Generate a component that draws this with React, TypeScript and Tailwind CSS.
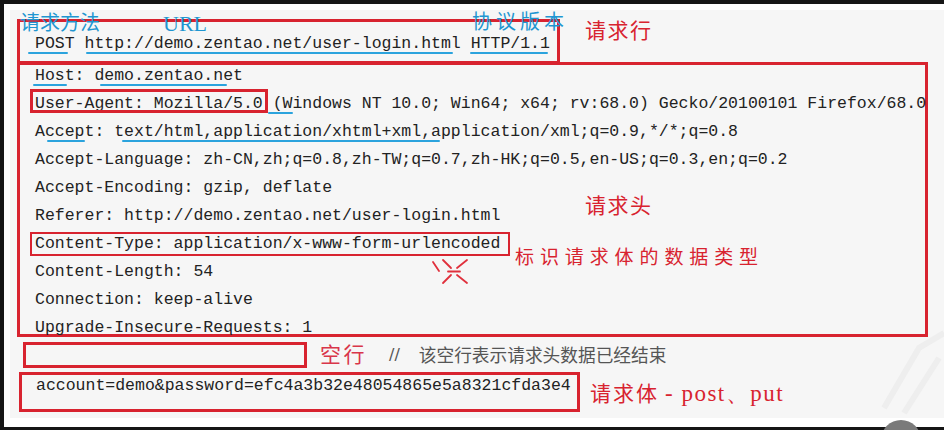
import React from "react";

function UL({ left, width, top }: { left: number; width: number; top: number }) {
  return (
    <span
      className="absolute h-[2px] bg-[#2ba3dd] rounded-full"
      style={{ left, width, top }}
    />
  );
}

export default function App() {
  return (
    <div className="relative w-[944px] h-[430px] overflow-hidden bg-[#161616] pt-[4px] pl-[4px]">
      <div className="h-[423px] bg-white pl-[6px] pt-[6px] pb-[9px]">
        <div className="relative h-full bg-[#f6f6f6] text-[#222] font-['Liberation_Mono','DejaVu_Sans_Mono',monospace] text-[16.5px]">
          {/* Request line row */}
          <div className="flex items-start pt-[9px] pl-[7px]">
            <div className="w-[543px] h-[45px] border-[3px] border-[#d8232f] pt-[9px] pl-[15px]">
              <div className="relative leading-[26px] whitespace-pre">
                POST http://demo.zentao.net/user-login.html HTTP/1.1
                <UL left={-7} width={40} top={21} />
                <UL left={51} width={367} top={21} />
                <UL left={435} width={78} top={21} />
              </div>
            </div>
            <div className="ml-[25px] mt-[0px] text-[21px] leading-none tracking-[1.5px] text-[#d8232f] font-['Noto_Sans_CJK_SC',sans-serif]">
              请求行
            </div>
          </div>

          {/* Header box */}
          <div className="relative ml-[7px] -mt-[2px] w-[911px] h-[275px] border-[3px] border-[#d8232f]">
            <div className="-mt-[3px] pl-[15px] leading-[28px] whitespace-pre">
              <div className="relative h-[28px]">
                Host: demo.zentao.net
                <UL left={-2} width={34} top={22} />
                <UL left={65} width={127} top={22} />
              </div>
              <div className="relative h-[28px]">
                User-Agent: Mozilla/5.0 (Windows NT 10.0; Win64; x64; rv:68.0) Gecko/20100101 Firefox/68.0
                <span className="absolute left-[-5px] top-[-1px] w-[238px] h-[24px] border-[3px] border-[#d8232f]" />
                <UL left={233} width={25} top={22} />
              </div>
              <div className="relative h-[28px]">
                Accept: text/html,application/xhtml+xml,application/xml;q=0.9,*/*;q=0.8
                <UL left={12} width={38} top={22} />
                <UL left={87} width={318} top={22} />
              </div>
              <div className="h-[28px]">Accept-Language: zh-CN,zh;q=0.8,zh-TW;q=0.7,zh-HK;q=0.5,en-US;q=0.3,en;q=0.2</div>
              <div className="h-[28px]">Accept-Encoding: gzip, deflate</div>
              <div className="h-[28px]">Referer: http://demo.zentao.net/user-login.html</div>
              <div className="relative h-[28px]">
                Content-Type: application/x-www-form-urlencoded
                <span className="absolute left-[-5px] top-[2px] w-[480px] h-[24px] border-2 border-[#d8232f]" />
              </div>
              <div className="relative h-[28px]">
                Content-Length: 54
                <svg className="absolute left-[395px] top-[0px]" width="46" height="28" viewBox="0 0 46 28" fill="none" stroke="#e0303c" strokeWidth="1.8" strokeLinecap="round">
                  <path d="M3 4 L9 13" />
                  <path d="M13 2 L21 10" />
                  <path d="M13 25 L21 17" />
                  <path d="M37 2 L27 10" />
                  <path d="M37 25 L27 17" />
                  <path d="M18 13.5 L30 13.5" />
                </svg>
              </div>
              <div className="h-[28px]">Connection: keep-alive</div>
              <div className="h-[28px]">Upgrade-Insecure-Requests: 1</div>
            </div>
            <div className="absolute left-[565px] top-[129px] text-[21px] leading-none tracking-[1.5px] text-[#d8232f] font-['Noto_Sans_CJK_SC',sans-serif]">
              请求头
            </div>
            <div className="absolute left-[495px] top-[181px] text-[19px] leading-none tracking-[5.9px] text-[#d8232f] font-['Noto_Sans_CJK_SC',sans-serif]">
              标识请求体的数据类型
            </div>
          </div>

          {/* Empty line row */}
          <div className="flex items-center mt-[5px]">
            <div className="ml-[13px] w-[284px] h-[26px] border-[3px] border-[#d8232f]" />
            <div className="ml-[13px] -mt-[3px] text-[21px] leading-none tracking-[2.5px] text-[#d9364a] font-['Noto_Sans_CJK_SC',sans-serif]">
              空行
            </div>
            <div className="ml-[22px] flex items-center text-[#555] text-[17.7px] leading-none font-['Noto_Sans_CJK_SC',sans-serif]">
              <span className="font-['DejaVu_Sans',sans-serif] text-[16px] mr-[19px]">//</span>
              <span>该空行表示请求头数据已经结束</span>
            </div>
          </div>

          {/* Body row */}
          <div className="flex items-start mt-[4px]">
            <div className="ml-[9px] w-[561px] h-[40px] border-[3px] border-[#d8232f] pl-[14px] leading-[22px] whitespace-pre">
              account=demo&amp;password=efc4a3b32e48054865e5a8321cfda3e4
            </div>
            <div className="ml-[10px] mt-[10px] flex items-baseline text-[#d8232f] leading-none">
              <span className="text-[21px] tracking-[2px] font-['Noto_Sans_CJK_SC',sans-serif]">请求体</span>
              <span className="ml-[6px] text-[23px] tracking-[1.5px] font-['Liberation_Serif',serif]">- post、put</span>
            </div>
          </div>

          {/* Overlay labels on top of the request line */}
          <div className="absolute left-[10px] top-[2px] text-[20px] leading-none text-[#1f96d1] font-['Noto_Sans_CJK_SC',sans-serif]">
            请求方法
          </div>
          <div className="absolute left-[153px] top-[3px] text-[22px] leading-none text-[#1f96d1] font-['Liberation_Serif',serif]">
            URL
          </div>
          <div className="absolute left-[462px] top-[1px] text-[20px] leading-none tracking-[4px] text-[#1f96d1] font-['Noto_Sans_CJK_SC',sans-serif]">
            协议版本
          </div>

          {/* faint watermark */}
          <svg className="absolute right-0 bottom-0" width="80" height="90" viewBox="0 0 80 90" fill="none" stroke="#eeeeee" strokeWidth="6">
            <path d="M20 80 L55 20 L80 5" />
            <path d="M40 85 L75 30" />
          </svg>
        </div>
      </div>
      <div className="absolute left-[881px] top-[420px] w-[40px] h-[40px] rounded-full bg-[#7a7a7a]" />
    </div>
  );
}
